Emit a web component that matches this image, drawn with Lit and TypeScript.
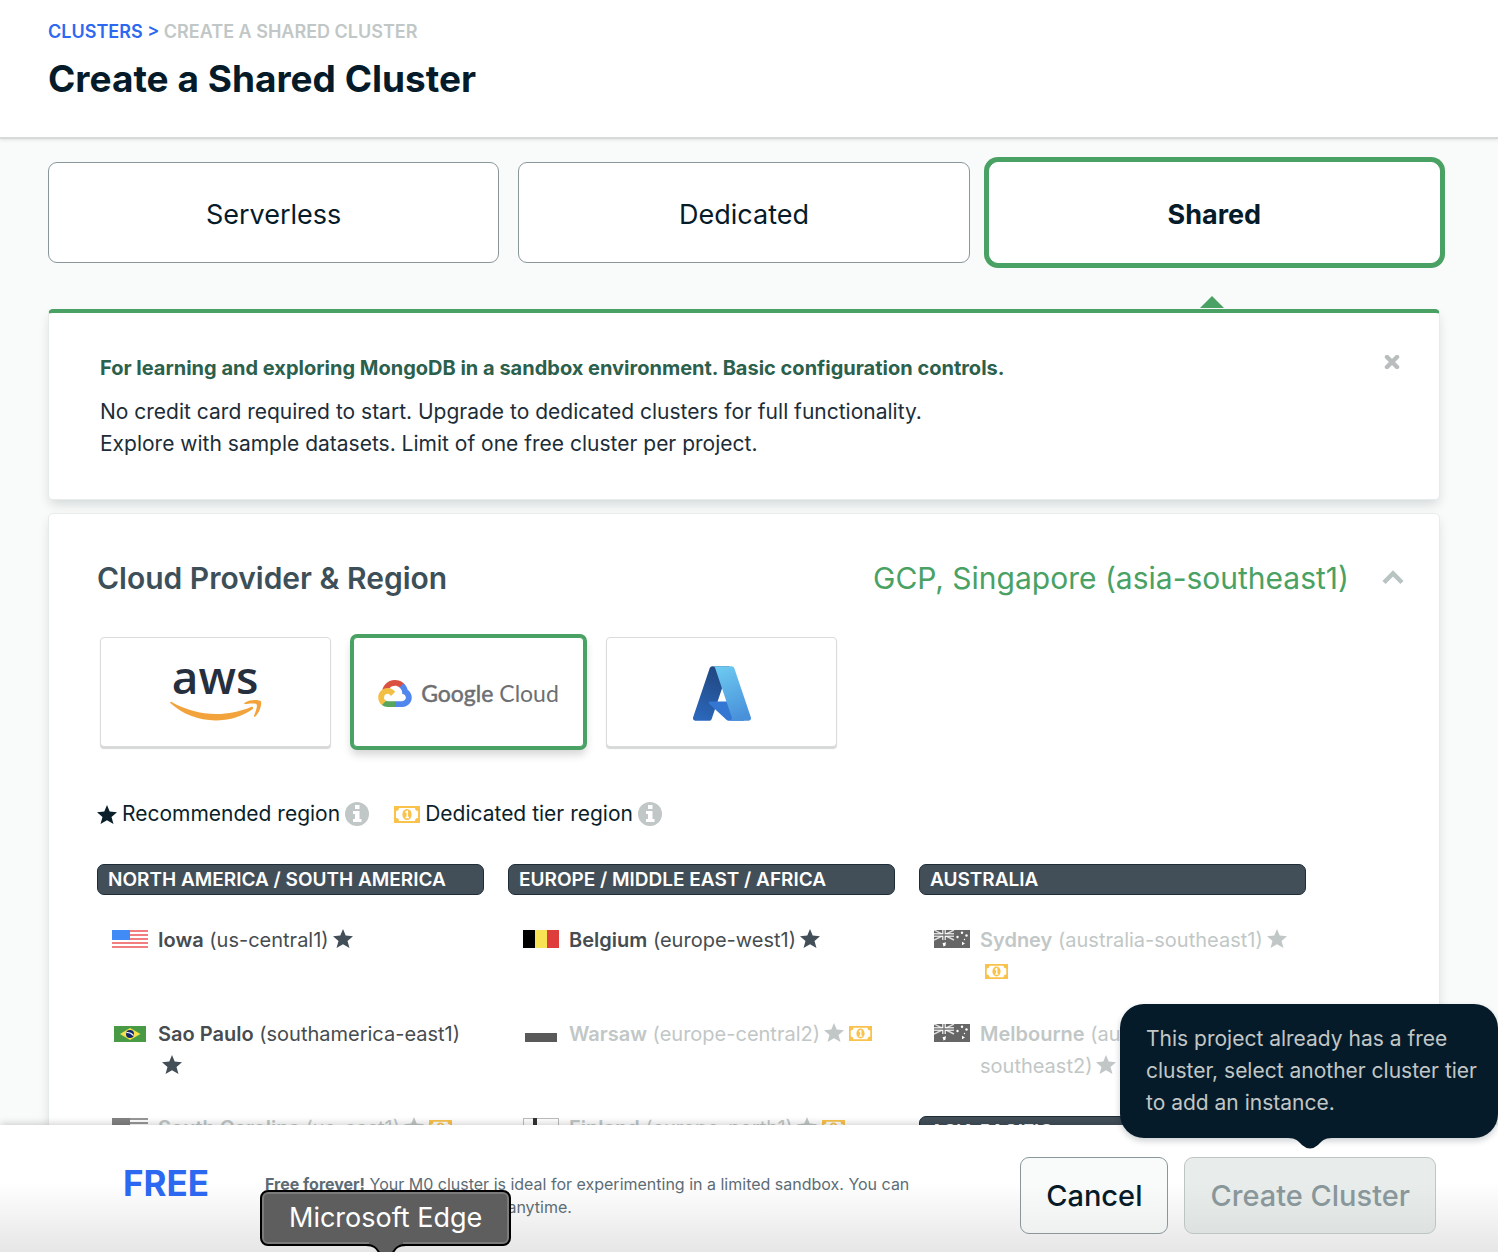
import { LitElement, html, css, svg, nothing } from "lit";
import { customElement, property, state } from "lit/decorators.js";
import { classMap } from "lit/directives/class-map.js";

interface Region {
  city: string;
  code: string;
  flag: string;
  enabled?: boolean;
  recommended?: boolean;
  dedicated?: boolean;
}

interface RegionGroup {
  title: string;
  regions: Region[];
}

const COLUMNS: RegionGroup[][] = [
  [
    {
      title: "NORTH AMERICA / SOUTH AMERICA",
      regions: [
        { city: "Iowa", code: "us-central1", flag: "us", enabled: true, recommended: true },
        { city: "Sao Paulo", code: "southamerica-east1", flag: "br", enabled: true, recommended: true },
        { city: "South Carolina", code: "us-east1", flag: "us", recommended: true, dedicated: true },
      ],
    },
  ],
  [
    {
      title: "EUROPE / MIDDLE EAST / AFRICA",
      regions: [
        { city: "Belgium", code: "europe-west1", flag: "be", enabled: true, recommended: true },
        { city: "Warsaw", code: "europe-central2", flag: "pl", recommended: true, dedicated: true },
        { city: "Finland", code: "europe-north1", flag: "fi", recommended: true, dedicated: true },
      ],
    },
  ],
  [
    {
      title: "AUSTRALIA",
      regions: [
        { city: "Sydney", code: "australia-southeast1", flag: "au", recommended: true, dedicated: true },
        { city: "Melbourne", code: "australia-southeast2", flag: "au", recommended: true, dedicated: true },
      ],
    },
    { title: "ASIA PACIFIC", regions: [] },
  ],
];

const starShape = svg`<path fill="currentColor" d="M10 0 L12.7 6.6 L20 7.2 L14.5 11.9 L16.5 19 L10 15.3 L3.5 19 L5.5 11.9 L0 7.2 L7.3 6.6 Z"/>`;

const cashShape = svg`
  <rect width="26" height="17" fill="#f9c24b"/>
  <path fill="#fff" d="M5 2h16a3 3 0 0 0 3 3v7a3 3 0 0 0-3 3H5a3 3 0 0 0-3-3V5a3 3 0 0 0 3-3z"/>
  <ellipse cx="13" cy="8.5" rx="4.6" ry="5.6" fill="#f9c24b"/>
  <path d="M11.3 6.4 L13.3 5.2 V11.4 M11.4 11.4 H15" fill="none" stroke="#fff" stroke-width="1.5"/>`;

const FLAGS: Record<string, unknown> = {
  us: svg`
    <rect width="36" height="18" fill="#fff"/>
    <path d="M0 1h36M0 5h36M0 9h36M0 13h36M0 17h36" stroke="#f27f80" stroke-width="2"/>
    <rect width="18" height="10" fill="#418bf7"/>`,
  br: svg`
    <rect x="2" y="2" width="32" height="16" fill="#489b44"/>
    <path d="M8 10 L18 4 L28.500 10 L18 16 Z" fill="#f6e04b"/>
    <circle cx="18" cy="10" r="4" fill="#12276f"/>
    <path d="M14.500 8.600 Q18.500 8 21.500 11.500" fill="none" stroke="#fff" stroke-width="1.200"/>`,
  be: svg`
    <rect width="12" height="18" fill="#000"/>
    <rect x="12" width="12" height="18" fill="#f7e353"/>
    <rect x="24" width="12" height="18" fill="#df3c3c"/>`,
  pl: svg`
    <rect x="2" width="32" height="9" fill="#fff"/>
    <rect x="2" y="9" width="32" height="9" fill="#595959"/>`,
  fi: svg`
    <rect x="0.500" y="0.500" width="35" height="17" fill="#fff" stroke="#b9bdbd"/>
    <path d="M12 0v18M0 9h36" stroke="#333" stroke-width="4"/>`,
  au: svg`
    <rect width="36" height="18" fill="#666"/>
    <path d="M0 0 L20 10 M20 0 L0 10" stroke="#ddd" stroke-width="1.500"/>
    <path d="M10 0v10M0 5h20" stroke="#fff" stroke-width="3.500"/>
    <path d="M10 0v10M0 5h20" stroke="#777" stroke-width="1.400"/>
    <g fill="#fff">
      <path d="M8.500 13.200l3.500-.9-.6 3.400-2 .8-.2-1.500z"/>
      <circle cx="28" cy="2.800" r="1.200"/><circle cx="23.500" cy="7" r="1.200"/>
      <circle cx="32.500" cy="5.500" r="1.200"/><circle cx="30.500" cy="9.500" r=".7"/>
      <path d="M28 11.800l3 1.800-3 1.600z"/>
    </g>`,
};

@customElement("region-item")
class RegionItem extends LitElement {
  @property({ attribute: false }) region!: Region;

  static styles = css`
    :host { display: block; }
    .item {
      display: flex;
      gap: 10px;
      width: 100%;
      min-height: 94px;
      padding: 15px;
      border: 0;
      background: none;
      font: inherit;
      text-align: left;
      color: #464c4f;
      cursor: pointer;
      box-sizing: border-box;
    }
    .item:disabled { color: #c1c7c6; cursor: default; }
    .flag { flex: none; width: 36px; height: 18px; margin-top: 6px; }
    .item:disabled .flag { filter: grayscale(1); }
    .label { min-width: 0; }
    .city { font-weight: 600; }
    .star { width: 20px; height: 19px; margin-left: 4px; vertical-align: -1px; color: #424f59; }
    .item:disabled .star { color: #c1c7c6; }
    .cash { width: 23px; height: 15px; margin-left: 5px; vertical-align: 0; }
  `;

  render() {
    const r = this.region;
    return html`
      <button class="item" type="button" ?disabled=${!r.enabled}>
        <svg class="flag" viewBox="0 0 36 18" aria-hidden="true">${FLAGS[r.flag]}</svg>
        <span class="label"
          ><span class="city">${r.city}</span> (${r.code})${r.recommended
            ? html`<wbr /><svg class="star" viewBox="0 0 20 19" role="img" aria-label="Recommended">${starShape}</svg>`
            : nothing}${r.dedicated
            ? html`<wbr /><svg class="cash" viewBox="0 0 26 17" preserveAspectRatio="none" role="img" aria-label="Dedicated tier">${cashShape}</svg>`
            : nothing}</span
        >
      </button>
    `;
  }
}

@customElement("provider-logo")
class ProviderLogo extends LitElement {
  @property() name = "aws";

  static styles = css`
    :host { display: flex; align-items: center; justify-content: center; padding-top: 2px; }
    .aws-word { font-family: "Open Sans", sans-serif; font-size: 46px; font-weight: 600; fill: #252f3e; }
    .google { display: flex; align-items: center; gap: 9px; }
    .google-word { font-family: Lato, sans-serif; font-size: 23px; line-height: 32px; color: #6d6f72; white-space: nowrap; }
    .strong { -webkit-text-stroke: 0.5px #6d6f72; }
  `;

  render() {
    if (this.name === "aws") {
      return html`
        <svg width="92" height="56" viewBox="0 0 92 56" role="img" aria-label="AWS">
          <text class="aws-word" x="45" y="29" text-anchor="middle">aws</text>
          <g transform="translate(0 1) scale(0.357)" fill="#f3a33b">
            <path d="M230.993 120.964c-27.888 20.614-68.41 31.538-103.247 31.538-48.82 0-92.812-18.053-126.04-48.063-2.633-2.377-.26-5.6 2.899-3.744 35.942 20.874 80.267 33.515 126.115 33.515 30.93 0 64.913-6.431 96.19-19.663 4.652-2.118 8.628 3.046 4.083 6.417z"/>
            <path d="M242.614 107.708c-3.569-4.573-23.602-2.193-32.676-1.115-2.714.335-3.13-2.046-.669-3.793 15.952-11.193 42.164-7.958 45.213-4.203 3.05 3.792-.818 30.012-15.765 42.577-2.305 1.933-4.499.93-3.495-1.6 3.384-8.403 10.932-27.294 7.392-31.866z"/>
          </g>
        </svg>
      `;
    }
    if (this.name === "gcp") {
      return html`
        <span class="google">
          <svg width="34" height="27" viewBox="0 0 256 206" aria-hidden="true">
            <path fill="#db5140" d="M170.2517,56.8186 L192.5047,34.5656 L193.9877,25.1956 C153.4367,-11.6774 88.9757,-7.4964 52.4207,33.9196 C42.2667,45.4226 34.7337,59.7636 30.7167,74.5726 L38.6867,73.4496 L83.1917,66.1106 L86.6277,62.5966 C106.4247,40.8546 139.8977,37.9296 162.7557,56.4286 Z"/>
            <path fill="#5086ee" d="M224.2048,73.9182 C219.0898,55.0822 208.5888,38.1492 193.9878,25.1962 L162.7558,56.4282 C175.9438,67.2042 183.4568,83.4382 183.1348,100.4652 L183.1348,106.0092 C198.4858,106.0092 210.9318,118.4542 210.9318,133.8052 C210.9318,149.1572 198.4858,161.2902 183.1348,161.2902 L127.4638,161.2902 L121.9978,167.2242 L121.9978,200.5642 L127.4638,205.7952 L183.1348,205.7952 C223.0648,206.1062 255.6868,174.3012 255.9978,134.3712 C256.1858,110.1682 244.2528,87.4782 224.2048,73.9182"/>
            <path fill="#58a65c" d="M71.8704,205.7957 L127.4634,205.7957 L127.4634,161.2897 L71.8704,161.2897 C67.9094,161.2887 64.0734,160.4377 60.4714,158.7917 L52.5844,161.2117 L30.1754,183.4647 L28.2234,191.0387 C40.7904,200.5277 56.1234,205.8637 71.8704,205.7957"/>
            <path fill="#f2bf42" d="M71.8704,61.4255 C31.9394,61.6635 -0.2366,94.2275 0.0014,134.1575 C0.1344,156.4555 10.5484,177.4455 28.2234,191.0385 L60.4714,158.7915 C46.4804,152.4705 40.2634,136.0055 46.5844,122.0155 C52.9054,108.0255 69.3704,101.8085 83.3594,108.1285 C89.5244,110.9135 94.4614,115.8515 97.2464,122.0155 L129.4944,89.7685 C115.7734,71.8315 94.4534,61.3445 71.8704,61.4255"/>
          </svg>
          <span class="google-word"><span class="strong">Google</span> Cloud</span>
        </span>
      `;
    }
    return html`
      <svg width="58" height="55" viewBox="4 6.5 88 83" role="img" aria-label="Azure">
        <defs>
          <linearGradient id="left" x1="0.6" y1="0" x2="0.3" y2="1">
            <stop offset="0" stop-color="#21467f"/><stop offset="1" stop-color="#2b67bb"/>
          </linearGradient>
          <linearGradient id="right" x1="0.3" y1="0" x2="0.6" y2="1">
            <stop offset="0" stop-color="#6cc8f0"/><stop offset="1" stop-color="#4890da"/>
          </linearGradient>
        </defs>
        <path fill="url(#left)" d="M33.338 6.544h26.038l-27.03 80.087a4.152 4.152 0 0 1-3.933 2.824H8.149a4.145 4.145 0 0 1-3.928-5.47L29.404 9.368a4.152 4.152 0 0 1 3.934-2.825z"/>
        <path fill="#3377d2" d="M71.175 60.261h-41.29a1.911 1.911 0 0 0-1.305 3.309l26.532 24.764a4.171 4.171 0 0 0 2.846 1.121h23.38z"/>
        <path fill="url(#right)" d="M66.595 9.364a4.145 4.145 0 0 0-3.928-2.82H33.648a4.146 4.146 0 0 1 3.928 2.82l25.184 74.62a4.146 4.146 0 0 1-3.928 5.472h29.02a4.146 4.146 0 0 0 3.927-5.472z"/>
      </svg>
    `;
  }
}

@customElement("app-root")
class AppRoot extends LitElement {
  @state() private tier = "Shared";
  @state() private provider = "gcp";

  static styles = css`
    :host {
      position: relative;
      display: flex;
      flex-direction: column;
      height: 100vh;
      overflow: hidden;
      background: #f9fbfa;
      color: #0b1f2b;
      font-family: Inter, "Liberation Sans", sans-serif;
      font-size: 20px;
      line-height: 32px;
    }
    button { font-family: inherit; color: inherit; cursor: pointer; }
    h1, h2, h3, p, ul { margin: 0; padding: 0; font-weight: inherit; font-size: inherit; }
    ul { list-style: none; }

    .header {
      position: relative;
      z-index: 1;
      flex: none;
      padding: 20px 48px 36px;
      background: #fff;
      box-shadow: 0 2px 1px #d6dad9, 0 4px 3px rgba(6, 22, 33, 0.06);
    }
    .crumbs { font-size: 18px; line-height: 24px; font-weight: 600; color: #c1c7c6; }
    .crumbs a { color: #2d68f0; text-decoration: none; }
    .title { margin-top: 13px; font-size: 37px; line-height: 44px; font-weight: 700; color: #061b29; }

    .main { flex: 1; min-height: 0; padding: 25px 58px 0 48px; overflow-y: auto; scrollbar-width: none; }
    .tiers { display: grid; grid-template-columns: repeat(3, 1fr); gap: 0 19px; }
    .tier {
      height: 101px;
      padding: 4px 0 0;
      border: 1px solid #89979b;
      border-radius: 9px;
      background: #fff;
      font-size: 27px;
      color: #061b29;
    }
    .tier.active { border-color: #fff; box-shadow: 0 0 0 5px #49a163; font-weight: 700; }
    .arrow { grid-column: 3; justify-self: center; margin: 33px 4px 1px 0; width: 24px; height: 12px; }

    .card {
      border: 1px solid #e7eceb;
      border-radius: 5px;
      background: #fff;
      box-shadow: 0 6px 12px -2px rgba(6, 22, 33, 0.16);
    }
    .intro {
      display: flex;
      justify-content: space-between;
      align-items: flex-start;
      padding: 39px 39px 39px 51px;
      border-top: 4px solid #49a163;
      color: #1c2d38;
    }
    .copy { font-size: 21px; }
    .lead { margin-bottom: 12px; font-weight: 700; color: #2b604c; }
    .close { display: flex; padding: 3px 0; border: 0; background: none; }

    .setup { margin-top: 13px; padding: 44px 34px 0 48px; }
    .setup-head { display: flex; align-items: center; line-height: 40px; font-size: 30px; }
    .setup-title { flex: 1; font-weight: 600; color: #3d4f58; font-size: 30px; }
    .summary { color: #49a163; }
    .toggle { display: flex; margin-left: 32px; padding: 0; border: 0; background: none; }

    .providers { display: flex; gap: 22px; margin: 39px 0 0 3px; }
    .provider {
      width: 231px;
      height: 110px;
      padding: 0;
      border: 1px solid #d9dcdb;
      border-radius: 4px;
      background: #fff;
      box-shadow: 0 2px 1px #d6d8d8;
    }
    .provider.active {
      border-color: #49a163;
      box-shadow: 0 0 0 3px #49a163, 0 6px 8px 2px rgba(0, 0, 0, 0.16);
    }

    .legend { display: flex; gap: 25px; margin-top: 51px; font-size: 21px; }
    .legend-item { display: flex; align-items: center; gap: 5px; }
    .regions { display: grid; grid-template-columns: repeat(3, 1fr); gap: 24px; margin: 34px 99px 0 0; }
    .group + .group { margin-top: 19px; }
    .group-title {
      margin-bottom: 14px;
      padding: 0 10px;
      border: 1px solid #1f2d38;
      border-radius: 7px;
      background: #424f59;
      color: #fff;
      font-size: 19px;
      line-height: 29px;
      font-weight: 600;
    }

    .footer {
      position: relative;
      z-index: 1;
      flex: none;
      display: flex;
      align-items: center;
      gap: 16px;
      height: 127px;
      padding: 0 62px 0 123px;
      box-sizing: border-box;
      background: linear-gradient(#fff 45%, #e6e6e6);
      box-shadow: 0 -1px 8px rgba(0, 0, 0, 0.2);
    }
    .price { width: 126px; padding-bottom: 12px; font-size: 35px; line-height: 44px; font-weight: 700; color: #2d68f0; }
    .note { flex: 0 1 650px; margin-right: auto; padding-top: 15px; font-size: 16px; line-height: 23px; color: #5c6c75; }
    .actions { flex: none; display: flex; gap: 16px; padding-top: 14px; }
    .action {
      height: 77px;
      padding: 0 25px;
      border: 1px solid #89979b;
      border-radius: 9px;
      background: linear-gradient(#f9fbfa 35%, #eff1f0);
      font-size: 29px;
      font-weight: 500;
      color: #061b29;
    }
    .action:disabled { border-color: #bdc5c4; background: linear-gradient(#e8edeb 35%, #dde2e0); color: #89979b; }

    .hint {
      position: absolute;
      right: 0;
      bottom: 114px;
      z-index: 2;
      width: 378px;
      padding: 19px 16px 19px 26px;
      box-sizing: border-box;
      border-radius: 24px;
      background: #061b29;
      color: #c1c7c6;
      font-size: 21px;
      box-shadow: 0 3px 6px rgba(6, 22, 33, 0.2);
    }
    .hint-tip { position: absolute; left: 168px; top: 100%; margin-top: -1px; }

    .dock {
      position: absolute;
      left: 260px;
      bottom: 6px;
      z-index: 3;
      padding: 8px 27px;
      border: 2px solid #000;
      border-radius: 8px;
      background: #5e5e5e;
      box-shadow: inset 0 0 0 2px #7b7b7b;
      color: #fff;
      font-size: 27px;
      line-height: 36px;
    }
    .dock-tip { position: absolute; left: 104px; top: 100%; margin-top: -2px; }
  `;

  private tierButton(name: string) {
    const active = this.tier === name;
    return html`<button
      type="button"
      class=${classMap({ tier: true, active })}
      aria-pressed=${active}
      @click=${() => (this.tier = name)}
    >${name}</button>`;
  }

  private providerButton(name: string, label: string) {
    const active = this.provider === name;
    return html`<button
      type="button"
      class=${classMap({ provider: true, active })}
      aria-label=${label}
      aria-pressed=${active}
      @click=${() => (this.provider = name)}
    ><provider-logo name=${name}></provider-logo></button>`;
  }

  private infoIcon() {
    return html`<svg width="24" height="24" viewBox="0 0 24 24" aria-hidden="true">
      <circle cx="12" cy="12" r="12" fill="#c1c7c6"/>
      <path fill="#fff" d="M10 3h4.500v4H10zM8 9h6.500v8H16.500v3H8v-3h2v-5H8z"/>
    </svg>`;
  }

  render() {
    return html`
      <header class="header">
        <nav class="crumbs" aria-label="Breadcrumb"><a href="#clusters">CLUSTERS &gt;</a> CREATE A SHARED CLUSTER</nav>
        <h1 class="title">Create a Shared Cluster</h1>
      </header>

      <main class="main">
        <div class="tiers">
          ${["Serverless", "Dedicated", "Shared"].map((t) => this.tierButton(t))}
          <svg class="arrow" viewBox="0 0 24 12" aria-hidden="true"><path d="M12 0 L24 12 H0 Z" fill="#49a163"/></svg>
        </div>

        <section class="card intro">
          <div>
            <p class="lead">For learning and exploring MongoDB in a sandbox environment. Basic configuration controls.</p>
            <p class="copy">No credit card required to start. Upgrade to dedicated clusters for full functionality.</p>
            <p class="copy">Explore with sample datasets. Limit of one free cluster per project.</p>
          </div>
          <button class="close" type="button" aria-label="Close">
            <svg width="16" height="14" viewBox="0 0 16 14"><path d="M3 2 L13 12 M13 2 L3 12" stroke="#babdbe" stroke-width="4.500" stroke-linecap="round"/></svg>
          </button>
        </section>

        <section class="card setup">
          <div class="setup-head">
            <h2 class="setup-title">Cloud Provider &amp; Region</h2>
            <span class="summary">GCP, Singapore (asia-southeast1)</span>
            <button class="toggle" type="button" aria-label="Collapse section">
              <svg width="24" height="16" viewBox="0 0 24 16"><path d="M3 12.500 L12 3.500 L21 12.500" fill="none" stroke="#b8c4c2" stroke-width="4.500"/></svg>
            </button>
          </div>

          <div class="providers">
            ${this.providerButton("aws", "AWS")}
            ${this.providerButton("gcp", "Google Cloud")}
            ${this.providerButton("azure", "Azure")}
          </div>

          <div class="legend">
            <span class="legend-item">
              <svg width="20" height="19" viewBox="0 0 20 19" aria-hidden="true">${starShape}</svg>
              Recommended region ${this.infoIcon()}
            </span>
            <span class="legend-item">
              <svg width="26" height="17" viewBox="0 0 26 17" aria-hidden="true">${cashShape}</svg>
              Dedicated tier region ${this.infoIcon()}
            </span>
          </div>

          <div class="regions">
            ${COLUMNS.map(
              (groups) => html`<div>
                ${groups.map(
                  (g) => html`<div class="group">
                    <h3 class="group-title">${g.title}</h3>
                    <ul>
                      ${g.regions.map((r) => html`<li><region-item .region=${r}></region-item></li>`)}
                    </ul>
                  </div>`
                )}
              </div>`
            )}
          </div>
        </section>
      </main>

      <footer class="footer">
        <div class="price">FREE</div>
        <p class="note"><b>Free forever!</b> Your M0 cluster is ideal for experimenting in a limited sandbox. You can upgrade to a production cluster anytime.</p>
        <div class="actions">
          <button class="action" type="button">Cancel</button>
          <button class="action" type="button" disabled>Create Cluster</button>
        </div>
      </footer>

      <div class="hint" role="tooltip">
        This project already has a free cluster, select another cluster tier to add an instance.
        <svg class="hint-tip" width="44" height="12" viewBox="0 0 44 12" aria-hidden="true">
          <path fill="#061b29" d="M0 0 H44 V1 C36 1 34 4 30 8 Q22 15 14 8 C10 4 8 1 0 1 Z"/>
        </svg>
      </div>

      <div class="dock">
        Microsoft Edge
        <svg class="dock-tip" width="40" height="10" viewBox="0 0 40 10" aria-hidden="true">
          <path fill="#5e5e5e" stroke="#000" stroke-width="2" d="M-1 3 C8 3 10 5 14 12 H26 C30 5 32 3 41 3"/>
          <path fill="#5e5e5e" d="M3 0 H37 V2 C31 3 29 5 25.500 10 H14.500 C11 5 9 3 3 2 Z"/>
        </svg>
      </div>
    `;
  }
}
